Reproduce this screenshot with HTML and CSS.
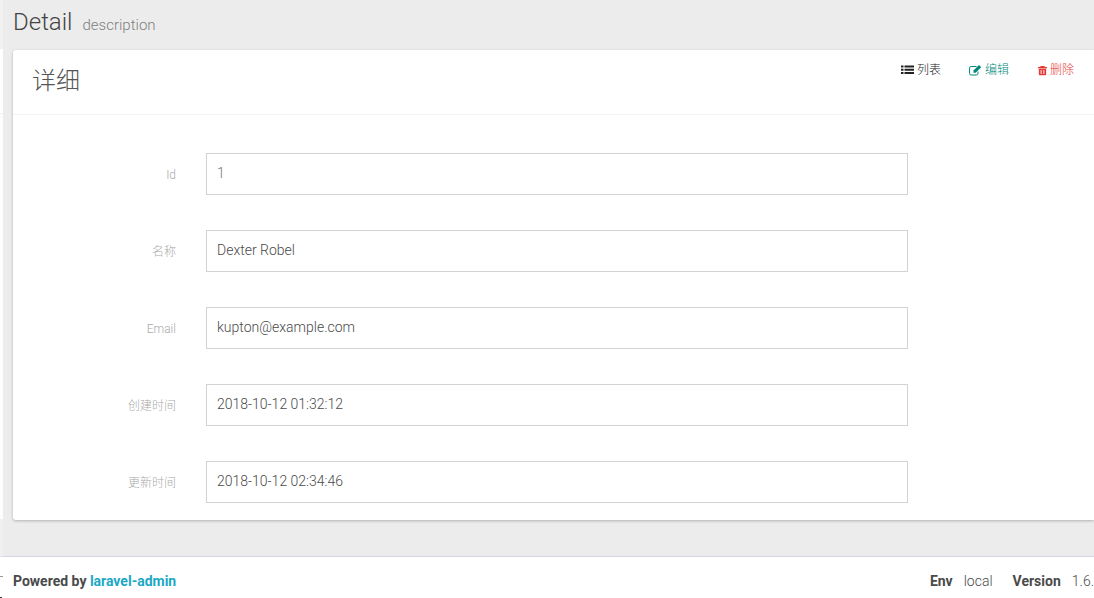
FILE: index.html
```html
<!DOCTYPE html>
<html lang="zh">
<head>
<meta charset="utf-8">
<title>Detail</title>
<link rel="stylesheet" href="styles.css">
</head>
<body>
<div class="rail">
  <div class="rail-block"></div>
  <div class="rail-mid"></div>
  <div class="rail-fill"></div>
  <div class="rail-band"></div>
  <div class="rail-foot"><div class="rail-mark"></div><div class="rail-dot"></div></div>
</div>
<div class="main">
  <header class="page-head">
    <h1 class="page-title">Detail</h1>
    <small class="page-desc">description</small>
  </header>
  <section class="box">
    <div class="box-head">
      <h3 class="box-title">详细</h3>
      <div class="tools">
        <a class="tool tool-list"><svg class="icon" viewBox="0 0 13 12"><path d="M0 1.500h2.500v2H0zM3.500 1.500H13v2H3.500zM0 4.800h2.500v2H0zM3.500 4.800H13v2H3.500zM0 8.100h2.500v2H0zM3.500 8.100H13v2H3.500z" fill="currentColor"/></svg>列表</a>
        <a class="tool tool-edit"><svg class="icon" viewBox="0 0 13 12"><path d="M9 7.500v1.800a1.700 1.700 0 0 1-1.700 1.700H2.200A1.700 1.700 0 0 1 .5 9.300V4.200a1.700 1.700 0 0 1 1.700-1.700H7.500" fill="none" stroke="currentColor"/><path d="M4.500 6.500 10 1l2.200 2.200L6.700 8.700H4.500z" fill="currentColor"/></svg>编辑</a>
        <a class="tool tool-del"><svg class="icon icon-del" viewBox="0 0 12 12"><path d="M4 1h4l.7 1.300H11v1.200H1V2.300h2.300zM2 4.200h8V10a1.200 1.200 0 0 1-1.200 1.200H3.200A1.200 1.200 0 0 1 2 10zM4 5.500v4.300h1V5.500zM7 5.500v4.300h1V5.500z" fill="currentColor" fill-rule="evenodd"/></svg>删除</a>
      </div>
    </div>
    <div class="form">
      <div class="row"><label class="label">Id</label><div class="field field-muted">1</div></div>
      <div class="row"><label class="label label-cjk">名称</label><div class="field">Dexter Robel</div></div>
      <div class="row"><label class="label">Email</label><div class="field">kupton@example.com</div></div>
      <div class="row"><label class="label label-cjk">创建时间</label><div class="field">2018-10-12 01:32:12</div></div>
      <div class="row"><label class="label label-cjk">更新时间</label><div class="field">2018-10-12 02:34:46</div></div>
    </div>
  </section>
  <footer class="footer">
    <div class="powered"><strong>Powered by</strong> <a class="brand">laravel-admin</a></div>
    <div class="meta"><strong>Env</strong><span class="meta-val">local</span><strong class="meta-key">Version</strong><span class="meta-val">1.6.</span></div>
  </footer>
</div>
</body>
</html>
```
FILE: styles.css
```css
* { box-sizing: border-box; }
html, body { margin: 0; height: 598px; overflow: hidden; }
body {
  display: flex;
  width: 1094px;
  font-family: Roboto, "Noto Sans CJK SC", sans-serif;
  font-size: 14px;
  font-weight: 300;
  color: #4a4a4a;
  background: #ececec;
}
.rail { width: 3px; display: flex; flex-direction: column; background: #fff; flex: none; overflow: hidden; }
.rail-block { height: 49px; background: #f1f1f1; }
.rail-mid { height: 64px; background: #fff; }
.rail-fill { flex: 1; background: #fdfdfd; border-top: 1px solid #eee; }
.rail-band { height: 37px; background: #f0f0f0; }
.rail-foot { height: 42px; background: #fff; border-top: 1px solid #e2e2e2; padding-top: 19px; }
.rail-mark { height: 1px; background: #999; }
.rail-dot { height: 1px; width: 2px; margin-top: 20px; background: #333; }
.main { flex: 1; min-width: 0; display: flex; flex-direction: column; background: #ececec; }
.page-head { height: 50px; padding: 8px 0 0 10px; display: flex; align-items: baseline; gap: 10px; }
.page-title { margin: 0; font-size: 24px; font-weight: 300; color: #444; line-height: 28px; }
.page-desc { font-size: 15px; font-weight: 300; color: #808080; }
.box {
  margin-left: 10px;
  height: 470px;
  background: #fff;
  border-radius: 3px 0 0 3px;
  box-shadow: 0 1px 3px rgba(0,0,0,.25);
}
.box-head { height: 65px; border-bottom: 1px solid #f4f4f4; padding: 15px 20px 15px 19px; display: flex; justify-content: space-between; align-items: flex-start; }
.box-title { margin: 0; font-size: 24px; line-height: 33px; font-weight: 300; color: #555; }
.tools { display: flex; gap: 28px; font-size: 12px; line-height: 14px; margin-top: -2px; }
.tool { display: flex; align-items: center; gap: 3px; }
.tool-list { color: #222; }
.tool-edit { color: #00897b; }
.tool-del { color: #e53935; gap: 2px; }
.icon { width: 13px; height: 12px; flex: none; }
.icon-del { width: 11px; height: 11px; }
.form { padding-top: 38px; display: flex; flex-direction: column; gap: 35px; }
.row { display: flex; align-items: center; }
.label { width: 163px; text-align: right; font-size: 12px; color: #aaa; padding-top: 2px; }
.label-cjk { padding-top: 0; padding-bottom: 2px; }
.field {
  margin-left: 30px;
  width: 702px;
  height: 42px;
  padding: 0 10px;
  border: 1px solid #d2d2d2;
  font-size: 14px;
  line-height: 38px;
}
.field-muted { color: #777; }
.footer {
  margin-top: 36px;
  flex: 1;
  background: #fff;
  border-top: 1px solid #d2d6de;
  padding: 14px 0 0 10px;
  display: flex;
  justify-content: space-between;
  line-height: 20px;
}
.footer strong { font-weight: 700; }
.brand { font-weight: 700; color: #1ba8c4; }
.meta { display: flex; white-space: nowrap; }
.meta-val { margin-left: 11px; }
.meta-key { margin-left: 20px; }
```
